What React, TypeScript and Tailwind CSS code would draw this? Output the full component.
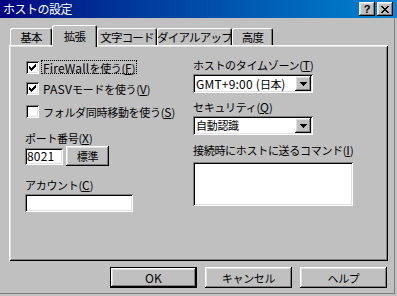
import React from "react";

const raised =
  "shadow-[inset_-1px_-1px_0_#000,inset_1px_1px_0_#fff,inset_-2px_-2px_0_#808080,inset_2px_2px_0_#dfdfdf]";
const sunken =
  "shadow-[inset_1px_1px_0_#808080,inset_-1px_-1px_0_#fff,inset_2px_2px_0_#000,inset_-2px_-2px_0_#dfdfdf]";

function L({ children }: { children: React.ReactNode }) {
  return <span className="text-[12px] tracking-[0.2px]">{children}</span>;
}

function Check({ checked, children, focus, className }: { checked?: boolean; children: React.ReactNode; focus?: boolean; className?: string }) {
  return (
    <div className={"flex items-center h-[20px] pl-[1px] " + (className || "")}>
      <div className={"w-[13px] h-[13px] bg-white flex items-center justify-center " + sunken}>
        {checked && (
          <svg width="7" height="7" viewBox="0 0 7 7" shapeRendering="crispEdges">
            <path d="M0 2h1v1h-1zM0 3h2v1h-2zM0 4h3v1h-3zM1 5h2v1h-2zM2 6h1v1h-1zM3 3h1v3h-1zM4 2h1v3h-1zM5 1h1v3h-1zM6 0h1v3h-1z" fill="#000" />
          </svg>
        )}
      </div>
      <div
        className={
          "ml-[2px] px-[1px] h-[14px] leading-[13px] border whitespace-nowrap " +
          (focus ? "border-dotted border-black" : "border-transparent")
        }
      >
        {children}
      </div>
    </div>
  );
}

function Select({ children }: { children: React.ReactNode }) {
  return (
    <div className={"w-[120px] h-[19px] bg-white flex items-center justify-between pl-[3px] pr-[2px] " + sunken}>
      <span className="leading-[15px] whitespace-nowrap">{children}</span>
      <div className={"w-[16px] h-[15px] bg-[#c0c0c0] flex items-center justify-center " + raised}>
        <svg width="7" height="4" viewBox="0 0 7 4" shapeRendering="crispEdges">
          <path d="M0 0h7v1h-7zM1 1h5v1h-5zM2 2h3v1h-3zM3 3h1v1h-1z" fill="#000" />
        </svg>
      </div>
    </div>
  );
}

function Tab({ label, w, selected }: { label: string; w: string; selected?: boolean }) {
  return (
    <div
      className={
        w +
        " flex justify-center bg-[#c0c0c0] rounded-t-[2px] shadow-[inset_1px_1px_0_#fff,inset_-1px_0_0_#000,inset_-2px_0_0_#808080] " +
        (selected ? "h-[22px] mb-[-2px] relative z-10 pt-[4px]" : "h-[17px] pt-[2px]")
      }
    >
      <span className="leading-[14px] whitespace-nowrap text-[11.5px] tracking-[-0.8px]">{label}</span>
    </div>
  );
}

function Btn({ children, def, className }: { children: React.ReactNode; def?: boolean; className?: string }) {
  return (
    <div className={(def ? "border border-black " : "") + "w-[87px] h-[21px] " + (className || "")}>
      <div className={"w-full h-full flex items-center justify-center bg-[#c0c0c0] " + raised}>
        <span className="leading-[14px] whitespace-nowrap">{children}</span>
      </div>
    </div>
  );
}

export default function App() {
  return (
    <div className="w-[397px] h-[296px] bg-[#c0c0c0] text-black text-[11px] tracking-[-0.3px] font-['Noto_Sans_CJK_JP','Liberation_Sans',sans-serif] overflow-hidden">
      <div className="w-[395px] h-[294px] border-r border-b border-[#808080] flex flex-col">
        {/* Title bar */}
        <div className="h-[18px] w-[397px] bg-gradient-to-r from-[#000080] to-[#1084d0] flex items-center justify-between pl-[3px] pr-[4px]">
          <span className="text-white text-[12px] leading-[14px] tracking-[-0.5px]">ホストの設定</span>
          <div className="flex gap-[2px]">
            <div className={"w-[16px] h-[14px] bg-[#c0c0c0] flex items-center justify-center " + raised}>
              <span className="font-bold text-[11px] leading-[11px] font-['Liberation_Sans',sans-serif]">?</span>
            </div>
            <div className={"w-[16px] h-[14px] bg-[#c0c0c0] flex items-center justify-center " + raised}>
              <svg width="8" height="7" viewBox="0 0 8 7" shapeRendering="crispEdges">
                <path d="M0 0h2v1h-2zM6 0h2v1h-2zM1 1h2v1h-2zM5 1h2v1h-2zM2 2h4v1h-4zM3 3h2v1h-2zM2 4h4v1h-4zM1 5h2v1h-2zM5 5h2v1h-2zM0 6h2v1h-2zM6 6h2v1h-2z" fill="#000" />
              </svg>
            </div>
          </div>
        </div>

        {/* Tabs */}
        <div className="flex items-end h-[27px] pl-[10px]">
          <Tab label="基本" w="w-[42px]" />
          <Tab label="拡張" w="w-[45px]" selected />
          <Tab label="文字コード" w="w-[60px]" />
          <Tab label="ダイアルアップ" w="w-[75px]" />
          <Tab label="高度" w="w-[41px]" />
        </div>

        {/* Panel */}
        <div className="ml-[9px] w-[379px] h-[216px] shadow-[inset_1px_1px_0_#fff,inset_-1px_-1px_0_#000,inset_2px_2px_0_#dfdfdf,inset_-2px_-2px_0_#808080] pt-[12px] pl-[16px] flex">
          <div className="w-[168px] flex flex-col">
            <Check checked focus>
              <L>FireWall</L>を使う(<L><u>F</u></L>)
            </Check>
            <Check checked className="mt-[1px]">
              <L>PASV</L>モードを使う(<L><u>V</u></L>)
            </Check>
            <Check className="mt-[3px]">
              フォルダ同時移動を使う(<L><u>S</u></L>)
            </Check>
            <div className="mt-[10px] h-[14px] leading-[14px]">
              ポート番号(<L><u>X</u></L>)
            </div>
            <div className="mt-[1px] h-[20px] flex items-center gap-[3px]">
              <div className={"w-[38px] h-[17px] bg-white flex items-center pl-[2px] " + sunken}>
                <span className="leading-[13px]"><L>8021</L></span>
              </div>
              <Btn className="!w-[43px] !h-[20px]">標準</Btn>
            </div>
            <div className="mt-[12px] h-[14px] leading-[14px]">
              アカウント(<L><u>C</u></L>)
            </div>
            <div className={"mt-[2px] w-[108px] h-[18px] bg-white " + sunken}></div>
          </div>

          <div className="flex flex-col">
            <div className="mt-[1px] h-[14px] leading-[14px] whitespace-nowrap">
              ホストのタイムゾーン(<L><u>T</u></L>)
            </div>
            <div className="mt-[2px]">
              <Select><L>GMT+9:00 (</L>日本<L>)</L></Select>
            </div>
            <div className="mt-[7px] h-[14px] leading-[14px]">
              セキュリティ(<L><u>Q</u></L>)
            </div>
            <div className="mt-[2px]">
              <Select>自動認識</Select>
            </div>
            <div className="mt-[8px] h-[14px] leading-[14px] whitespace-nowrap">
              接続時にホストに送るコマンド(<L><u>I</u></L>)
            </div>
            <div className={"mt-[5px] w-[160px] h-[44px] bg-white " + sunken}></div>
          </div>
        </div>

        {/* Buttons */}
        <div className="mt-[6px] flex justify-end gap-[8px] pr-[7px]">
          <Btn def><L>OK</L></Btn>
          <Btn>キャンセル</Btn>
          <Btn>ヘルプ</Btn>
        </div>
      </div>
    </div>
  );
}
